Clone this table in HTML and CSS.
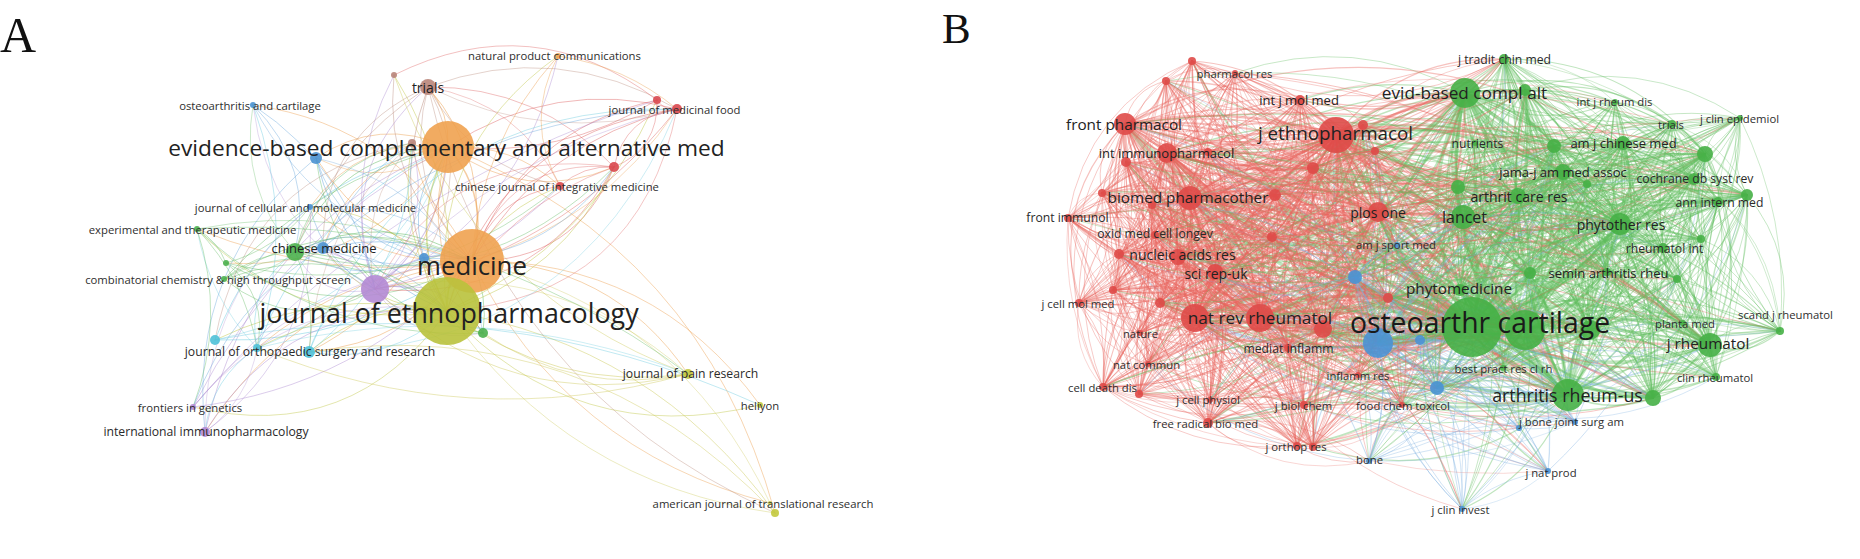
FILE: index.html
```html
<!DOCTYPE html>
<html lang="en">
<head>
<meta charset="utf-8">
<title>Journal co-citation networks</title>
<link rel="stylesheet" href="styles.css">
<script src="script.js" defer></script>
</head>
<body>
<div class="figure">
  <section class="panel">
    <svg class="net" width="930" height="559" viewBox="0 0 930 559" data-seed="11" data-kk="100" data-base="0.035" data-cross="0.7" data-wd="1200" data-w0="0.75" data-op="0.5" data-dbl="0.35" data-c0="0.14" data-c1="0.22" data-len="0">
      <g class="edges"></g>
      <g class="nodes">
        <circle class="n" data-k="or" cx="448" cy="147" r="26"/>
        <circle class="n" data-k="or" cx="472" cy="261" r="32"/>
        <circle class="n" data-k="ol" cx="447" cy="311" r="34"/>
        <circle class="n" data-k="pu" cx="375" cy="289" r="14"/>
        <circle class="n" data-k="br" cx="428" cy="87" r="8"/>
        <circle class="n" data-k="br" cx="394" cy="75" r="3"/>
        <circle class="n" data-k="br" cx="412" cy="143" r="4"/>
        <circle class="n" data-k="bl" cx="253" cy="105" r="3"/>
        <circle class="n" data-k="bl" cx="316" cy="158" r="6"/>
        <circle class="n" data-k="bl" cx="310" cy="207" r="3"/>
        <circle class="n" data-k="gr" cx="197" cy="229" r="3"/>
        <circle class="n" data-k="gr" cx="295" cy="252" r="9"/>
        <circle class="n" data-k="bl" cx="323" cy="248" r="6"/>
        <circle class="n" data-k="gr" cx="226" cy="263" r="3"/>
        <circle class="n" data-k="bl" cx="424" cy="258" r="5"/>
        <circle class="n" data-k="gr" cx="224" cy="279" r="3"/>
        <circle class="n" data-k="gr" cx="483" cy="333" r="5"/>
        <circle class="n" data-k="cy" cx="215" cy="340" r="5"/>
        <circle class="n" data-k="cy" cx="309" cy="352" r="6"/>
        <circle class="n" data-k="cy" cx="257" cy="348" r="4"/>
        <circle class="n" data-k="pu" cx="193" cy="407" r="3"/>
        <circle class="n" data-k="pu" cx="205" cy="432" r="5"/>
        <circle class="n" data-k="ye" cx="688" cy="374" r="5"/>
        <circle class="n" data-k="ye" cx="760" cy="405" r="3"/>
        <circle class="n" data-k="ye" cx="775" cy="513" r="4"/>
        <circle class="n" data-k="ye" cx="770" cy="503" r="2"/>
        <circle class="n" data-k="or" cx="558" cy="56" r="3"/>
        <circle class="n" data-k="re" cx="657" cy="100" r="4"/>
        <circle class="n" data-k="re" cx="677" cy="109" r="5"/>
        <circle class="n" data-k="re" cx="614" cy="167" r="5"/>
        <circle class="n" data-k="re" cx="560" cy="186" r="4"/>
      </g>
      <g class="labels">
        <text class="letter la" x="0" y="52">A</text>
        <text class="lab s14" x="428" y="87">trials</text>
        <text class="lab s11" x="250" y="105">osteoarthritis and cartilage</text>
        <text class="lab s23" x="446.5" y="147">evidence-based complementary and alternative med</text>
        <text class="lab s11" x="305.5" y="207">journal of cellular and molecular medicine</text>
        <text class="lab s11" x="192.5" y="229">experimental and therapeutic medicine</text>
        <text class="lab s13" x="324" y="248">chinese medicine</text>
        <text class="lab s26" x="472" y="265">medicine</text>
        <text class="lab s11" x="218" y="279">combinatorial chemistry &amp; high throughput screen</text>
        <text class="lab s27" x="449" y="312">journal of ethnopharmacology</text>
        <text class="lab s12" x="310" y="351">journal of orthopaedic surgery and research</text>
        <text class="lab s11" x="190" y="407">frontiers in genetics</text>
        <text class="lab s12" x="206" y="431">international immunopharmacology</text>
        <text class="lab s12" x="690.5" y="373">journal of pain research</text>
        <text class="lab s11" x="760" y="405">heliyon</text>
        <text class="lab s11" x="763" y="503">american journal of translational research</text>
        <text class="lab s11" x="554.5" y="55">natural product communications</text>
        <text class="lab s11" x="674.5" y="109">journal of medicinal food</text>
        <text class="lab s11" x="557" y="186">chinese journal of integrative medicine</text>
      </g>
    </svg>
  </section>
  <section class="panel">
    <svg class="net" width="930" height="559" viewBox="930 0 930 559" data-seed="29" data-kk="22" data-base="0.16" data-cross="0.32" data-wd="110" data-w0="0.7" data-op="0.4" data-dbl="0.35" data-c0="0.1" data-c1="0.2" data-len="280">
      <g class="edges"></g>
      <g class="nodes">
        <circle class="n" data-k="g" cx="1472" cy="327" r="30"/>
        <circle class="n" data-k="g" cx="1525" cy="330" r="20"/>
        <circle class="n" data-k="g" cx="1590" cy="330" r="10"/>
        <circle class="n" data-k="r" cx="1336" cy="135" r="18"/>
        <circle class="n" data-k="g" cx="1465" cy="93" r="15"/>
        <circle class="n" data-k="g" cx="1568" cy="395" r="16"/>
        <circle class="n" data-k="b" cx="1378" cy="343" r="15"/>
        <circle class="n" data-k="r" cx="1195" cy="318" r="14"/>
        <circle class="n" data-k="r" cx="1260" cy="318" r="14"/>
        <circle class="n" data-k="r" cx="1190" cy="198" r="12"/>
        <circle class="n" data-k="r" cx="1125" cy="124" r="11"/>
        <circle class="n" data-k="r" cx="1167" cy="153" r="10"/>
        <circle class="n" data-k="r" cx="1378" cy="212" r="10"/>
        <circle class="n" data-k="g" cx="1463" cy="217" r="12"/>
        <circle class="n" data-k="g" cx="1620" cy="224" r="11"/>
        <circle class="n" data-k="g" cx="1710" cy="345" r="12"/>
        <circle class="n" data-k="r" cx="1192" cy="61" r="4"/>
        <circle class="n" data-k="r" cx="1235" cy="73" r="3"/>
        <circle class="n" data-k="r" cx="1166" cy="81" r="4"/>
        <circle class="n" data-k="r" cx="1300" cy="100" r="5"/>
        <circle class="n" data-k="r" cx="1363" cy="125" r="5"/>
        <circle class="n" data-k="r" cx="1375" cy="151" r="4"/>
        <circle class="n" data-k="r" cx="1126" cy="162" r="5"/>
        <circle class="n" data-k="r" cx="1208" cy="152" r="4"/>
        <circle class="n" data-k="r" cx="1313" cy="168" r="6"/>
        <circle class="n" data-k="r" cx="1275" cy="195" r="6"/>
        <circle class="n" data-k="r" cx="1102" cy="193" r="4"/>
        <circle class="n" data-k="r" cx="1152" cy="205" r="4"/>
        <circle class="n" data-k="r" cx="1068" cy="218" r="4"/>
        <circle class="n" data-k="r" cx="1155" cy="235" r="4"/>
        <circle class="n" data-k="r" cx="1272" cy="237" r="5"/>
        <circle class="n" data-k="r" cx="1119" cy="254" r="5"/>
        <circle class="n" data-k="r" cx="1178" cy="257" r="8"/>
        <circle class="n" data-k="r" cx="1215" cy="272" r="8"/>
        <circle class="n" data-k="r" cx="1388" cy="298" r="5"/>
        <circle class="n" data-k="r" cx="1113" cy="290" r="4"/>
        <circle class="n" data-k="r" cx="1079" cy="303" r="4"/>
        <circle class="n" data-k="r" cx="1160" cy="303" r="5"/>
        <circle class="n" data-k="r" cx="1323" cy="329" r="9"/>
        <circle class="n" data-k="r" cx="1140" cy="333" r="3"/>
        <circle class="n" data-k="r" cx="1288" cy="348" r="4"/>
        <circle class="n" data-k="r" cx="1148" cy="364" r="3"/>
        <circle class="n" data-k="r" cx="1358" cy="375" r="3"/>
        <circle class="n" data-k="r" cx="1103" cy="387" r="4"/>
        <circle class="n" data-k="r" cx="1139" cy="394" r="4"/>
        <circle class="n" data-k="r" cx="1210" cy="400" r="3"/>
        <circle class="n" data-k="r" cx="1304" cy="405" r="4"/>
        <circle class="n" data-k="r" cx="1402" cy="405" r="3"/>
        <circle class="n" data-k="r" cx="1208" cy="423" r="5"/>
        <circle class="n" data-k="r" cx="1297" cy="446" r="4"/>
        <circle class="n" data-k="r" cx="1313" cy="447" r="4"/>
        <circle class="n" data-k="b" cx="1397" cy="245" r="3"/>
        <circle class="n" data-k="b" cx="1355" cy="277" r="7"/>
        <circle class="n" data-k="b" cx="1420" cy="340" r="5"/>
        <circle class="n" data-k="b" cx="1437" cy="388" r="7"/>
        <circle class="n" data-k="b" cx="1369" cy="461" r="3"/>
        <circle class="n" data-k="b" cx="1519" cy="428" r="3"/>
        <circle class="n" data-k="b" cx="1575" cy="422" r="3"/>
        <circle class="n" data-k="b" cx="1548" cy="471" r="3"/>
        <circle class="n" data-k="b" cx="1462" cy="509" r="3"/>
        <circle class="n" data-k="g" cx="1504" cy="59" r="5"/>
        <circle class="n" data-k="g" cx="1525" cy="90" r="6"/>
        <circle class="n" data-k="g" cx="1615" cy="102" r="3"/>
        <circle class="n" data-k="g" cx="1672" cy="124" r="4"/>
        <circle class="n" data-k="g" cx="1740" cy="118" r="3"/>
        <circle class="n" data-k="g" cx="1475" cy="143" r="3"/>
        <circle class="n" data-k="g" cx="1554" cy="146" r="7"/>
        <circle class="n" data-k="g" cx="1623" cy="143" r="7"/>
        <circle class="n" data-k="g" cx="1705" cy="154" r="8"/>
        <circle class="n" data-k="g" cx="1563" cy="172" r="8"/>
        <circle class="n" data-k="g" cx="1587" cy="184" r="4"/>
        <circle class="n" data-k="g" cx="1694" cy="179" r="6"/>
        <circle class="n" data-k="g" cx="1458" cy="187" r="7"/>
        <circle class="n" data-k="g" cx="1518" cy="196" r="8"/>
        <circle class="n" data-k="g" cx="1718" cy="202" r="5"/>
        <circle class="n" data-k="g" cx="1747" cy="195" r="6"/>
        <circle class="n" data-k="g" cx="1701" cy="239" r="4"/>
        <circle class="n" data-k="g" cx="1663" cy="248" r="5"/>
        <circle class="n" data-k="g" cx="1530" cy="273" r="6"/>
        <circle class="n" data-k="g" cx="1607" cy="272" r="4"/>
        <circle class="n" data-k="g" cx="1677" cy="279" r="4"/>
        <circle class="n" data-k="g" cx="1460" cy="290" r="6"/>
        <circle class="n" data-k="g" cx="1503" cy="368" r="3"/>
        <circle class="n" data-k="g" cx="1653" cy="398" r="8"/>
        <circle class="n" data-k="g" cx="1683" cy="323" r="3"/>
        <circle class="n" data-k="g" cx="1780" cy="331" r="4"/>
        <circle class="n" data-k="g" cx="1716" cy="377" r="4"/>
      </g>
      <g class="labels">
        <text class="letter lbb" x="942" y="43">B</text>
        <text class="lab s11" x="1234.5" y="73">pharmacol res</text>
        <text class="lab s13" x="1299" y="100">int j mol med</text>
        <text class="lab s15" x="1124" y="124">front pharmacol</text>
        <text class="lab s19" x="1335.5" y="133">j ethnopharmacol</text>
        <text class="lab s13" x="1166.5" y="153">int immunopharmacol</text>
        <text class="lab s15" x="1188" y="197">biomed pharmacother</text>
        <text class="lab s14" x="1378" y="212">plos one</text>
        <text class="lab s12" x="1067.5" y="217">front immunol</text>
        <text class="lab s12" x="1155" y="233">oxid med cell longev</text>
        <text class="lab s14" x="1182.5" y="254">nucleic acids res</text>
        <text class="lab s14" x="1216" y="273">sci rep-uk</text>
        <text class="lab s11" x="1396" y="244">am j sport med</text>
        <text class="lab s11" x="1078" y="303">j cell mol med</text>
        <text class="lab s17" x="1260" y="317">nat rev rheumatol</text>
        <text class="lab s11" x="1140.5" y="333">nature</text>
        <text class="lab s12" x="1288.5" y="348">mediat inflamm</text>
        <text class="lab s11" x="1146.5" y="364">nat commun</text>
        <text class="lab s11" x="1358" y="375">inflamm res</text>
        <text class="lab s11" x="1102.5" y="387">cell death dis</text>
        <text class="lab s11" x="1208" y="399">j cell physiol</text>
        <text class="lab s11" x="1303.5" y="405">j biol chem</text>
        <text class="lab s11" x="1403" y="405">food chem toxicol</text>
        <text class="lab s11" x="1205.5" y="423">free radical bio med</text>
        <text class="lab s11" x="1296" y="446">j orthop res</text>
        <text class="lab s11" x="1369.5" y="459">bone</text>
        <text class="lab s11" x="1571.5" y="421">j bone joint surg am</text>
        <text class="lab s11" x="1551" y="472">j nat prod</text>
        <text class="lab s11" x="1460.5" y="509">j clin invest</text>
        <text class="lab s12" x="1504.5" y="59">j tradit chin med</text>
        <text class="lab s17" x="1464.5" y="92">evid-based compl alt</text>
        <text class="lab s11" x="1614.5" y="101">int j rheum dis</text>
        <text class="lab s11" x="1671" y="124">trials</text>
        <text class="lab s11" x="1739.5" y="118">j clin epidemiol</text>
        <text class="lab s12" x="1477.5" y="143">nutrients</text>
        <text class="lab s13" x="1623.5" y="143">am j chinese med</text>
        <text class="lab s13" x="1563" y="172">jama-j am med assoc</text>
        <text class="lab s12" x="1695" y="178">cochrane db syst rev</text>
        <text class="lab s14" x="1519" y="196">arthrit care res</text>
        <text class="lab s12" x="1719.5" y="202">ann intern med</text>
        <text class="lab s16" x="1464.5" y="217">lancet</text>
        <text class="lab s14" x="1621" y="224">phytother res</text>
        <text class="lab s12" x="1664.5" y="248">rheumatol int</text>
        <text class="lab s13" x="1608.5" y="273">semin arthritis rheu</text>
        <text class="lab s15" x="1459" y="288">phytomedicine</text>
        <text class="lab s28" x="1480" y="322">osteoarthr cartilage</text>
        <text class="lab s11" x="1503.5" y="368">best pract res cl rh</text>
        <text class="lab s18" x="1567.5" y="395">arthritis rheum-us</text>
        <text class="lab s11" x="1685" y="323">planta med</text>
        <text class="lab s15" x="1708" y="343">j rheumatol</text>
        <text class="lab s11" x="1785.5" y="314">scand j rheumatol</text>
        <text class="lab s11" x="1715" y="377">clin rheumatol</text>
      </g>
    </svg>
  </section>
</div>
</body>
</html>
```
FILE: styles.css
```css
html, body {
  margin: 0;
  padding: 0;
  background: #ffffff;
}

.figure {
  display: flex;
  width: 1860px;
  height: 559px;
  overflow: hidden;
}

.panel {
  flex: none;
  width: 930px;
  height: 559px;
}

.panel svg {
  display: block;
}

.edges path {
  fill: none;
  stroke-linecap: round;
}

.n {
  fill-opacity: 0.9;
}

circle[data-k="or"] { fill: #efa250; }
circle[data-k="ol"] { fill: #b9c23c; }
circle[data-k="pu"] { fill: #b48ad4; }
circle[data-k="bl"] { fill: #4a92d2; }
circle[data-k="gr"] { fill: #4cb04e; }
circle[data-k="cy"] { fill: #4fc1d8; }
circle[data-k="re"] { fill: #d9484e; }
circle[data-k="br"] { fill: #b9857a; }
circle[data-k="ye"] { fill: #c3c93e; }
circle[data-k="r"]  { fill: #df4a48; }
circle[data-k="g"]  { fill: #46b046; }
circle[data-k="b"]  { fill: #4a92d4; }

.letter {
  font-family: "Liberation Serif", "Times New Roman", serif;
  fill: #111111;
}

.la { font-size: 50px; }
.lbb { font-size: 43px; }

.lab {
  font-family: "Open Sans", "DejaVu Sans", sans-serif;
  fill: #222222;
  text-anchor: middle;
  dominant-baseline: central;
}

.s11 { font-size: 11.3px; fill: #2e2e2e; }
.s12 { font-size: 12.2px; fill: #2a2a2a; }
.s13 { font-size: 13px; }
.s14 { font-size: 14px; }
.s15 { font-size: 15.3px; }
.s16 { font-size: 16px; }
.s17 { font-size: 17.2px; }
.s18 { font-size: 17.8px; }
.s19 { font-size: 18.8px; }
.s23 { font-size: 22.7px; }
.s26 { font-size: 25.8px; }
.s27 { font-size: 26.8px; }
.s28 { font-size: 28.4px; fill: #1a1a1a; }
```
FILE: script.js
```js
(function () {
  var NS = 'http://www.w3.org/2000/svg';
  var COLORS = {
    or: '#eb9a45', ol: '#bcc23a', pu: '#a985cf', bl: '#5c9fd8', gr: '#5bb85b',
    cy: '#5cc6dc', re: '#dc5a5a', br: '#b98a7c', ye: '#c8c44a',
    r: '#e8665f', g: '#62bd60', b: '#79aee0'
  };
  function rng(seed) {
    return function () {
      seed |= 0; seed = seed + 0x6D2B79F5 | 0;
      var t = Math.imul(seed ^ seed >>> 15, 1 | seed);
      t = t + Math.imul(t ^ t >>> 7, 61 | t) ^ t;
      return ((t ^ t >>> 14) >>> 0) / 4294967296;
    };
  }
  function curve(a, b, c) {
    var dx = b.x - a.x, dy = b.y - a.y;
    var mx = (a.x + b.x) / 2 - dy * c, my = (a.y + b.y) / 2 + dx * c;
    return 'M' + a.x + ' ' + a.y + 'Q' + mx.toFixed(1) + ' ' + my.toFixed(1) + ' ' + b.x + ' ' + b.y;
  }
  var svgs = document.querySelectorAll('svg.net');
  Array.prototype.forEach.call(svgs, function (svg) {
    var d = svg.dataset;
    var rand = rng(+d.seed);
    var K = +d.kk, base = +d.base, cross = +d.cross, wd = +d.wd, w0 = +d.w0, op = +d.op, dbl = +d.dbl;
    var c0 = +d.c0, c1 = +d.c1, L = +d.len;
    var nodes = Array.prototype.map.call(svg.querySelectorAll('circle.n'), function (c) {
      return { x: +c.getAttribute('cx'), y: +c.getAttribute('cy'), r: +c.getAttribute('r'), k: c.getAttribute('data-k') };
    });
    var g = svg.querySelector('g.edges');
    var frag = document.createDocumentFragment();
    function add(a, b, c, w) {
      var p = document.createElementNS(NS, 'path');
      p.setAttribute('d', curve(a, b, c));
      var src = rand() < 0.5 ? a : b;
      p.setAttribute('stroke', COLORS[src.k]);
      p.setAttribute('stroke-width', w.toFixed(2));
      p.setAttribute('stroke-opacity', op);
      frag.appendChild(p);
    }
    for (var i = 0; i < nodes.length; i++) {
      for (var j = i + 1; j < nodes.length; j++) {
        var a = nodes[i], b = nodes[j];
        var p = a.r * b.r / K + base;
        if (a.k !== b.k) p *= cross;
        if (L > 0) {
          var dist = Math.sqrt((a.x - b.x) * (a.x - b.x) + (a.y - b.y) * (a.y - b.y));
          p *= Math.exp(-dist / L);
        }
        if (rand() > p) continue;
        var sgn = rand() < 0.5 ? 1 : -1;
        var c = sgn * (c0 + rand() * c1);
        var w = Math.min(3.5, w0 + a.r * b.r / wd);
        add(a, b, c, w);
        if (rand() < dbl) add(b, a, c * (0.8 + rand() * 0.4), w * 0.8);
      }
    }
    g.appendChild(frag);
  });
})();
```
